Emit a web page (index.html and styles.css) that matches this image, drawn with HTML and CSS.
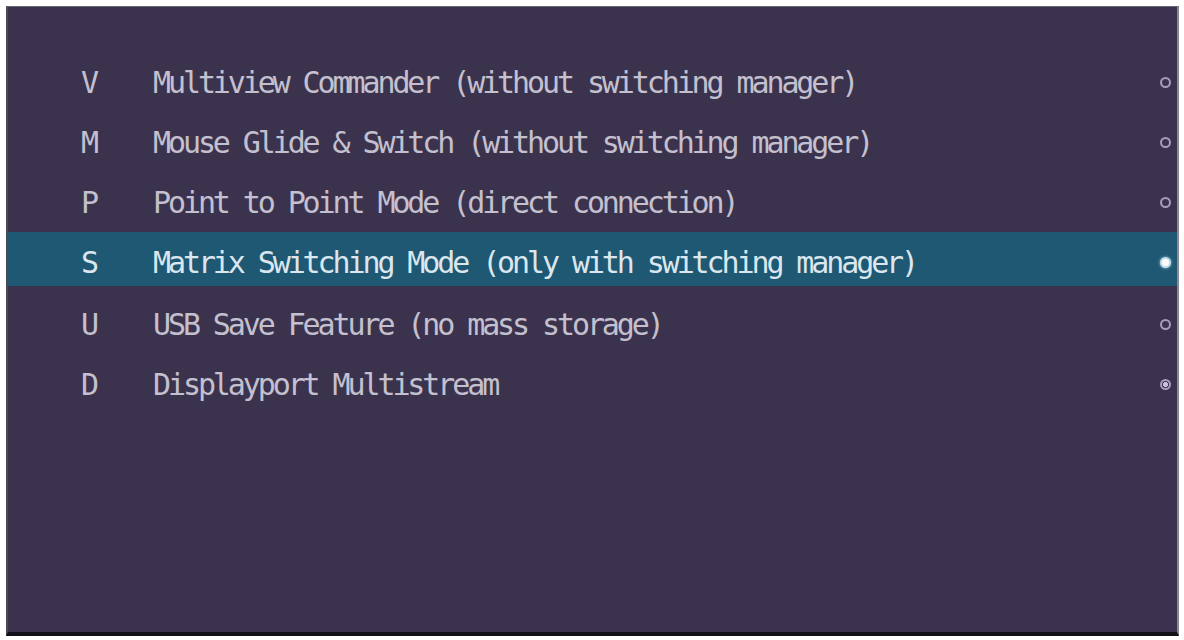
FILE: index.html
```html
<!DOCTYPE html>
<html>
<head>
<meta charset="utf-8">
<link rel="stylesheet" href="styles.css">
</head>
<body>
<div class="panel">
  <ul class="menu">
    <li class="row"><span class="key">V</span><span class="label">Multiview Commander (without switching manager)</span><span class="radio"></span></li>
    <li class="row"><span class="key">M</span><span class="label">Mouse Glide &amp; Switch (without switching manager)</span><span class="radio"></span></li>
    <li class="row"><span class="key">P</span><span class="label">Point to Point Mode (direct connection)</span><span class="radio"></span></li>
    <li class="row active"><span class="key">S</span><span class="label">Matrix Switching Mode (only with switching manager)</span><span class="radio on"></span></li>
    <li class="row"><span class="key">U</span><span class="label">USB Save Feature (no mass storage)</span><span class="radio"></span></li>
    <li class="row"><span class="key">D</span><span class="label">Displayport Multistream</span><span class="radio checked"></span></li>
  </ul>
</div>
</body>
</html>
```
FILE: styles.css
```css
html, body {
  margin: 0;
  padding: 0;
  background: #ffffff;
  width: 1184px;
  height: 640px;
  overflow: hidden;
}
.panel {
  margin: 6px 5px 0 6px;
  height: 630px;
  box-sizing: border-box;
  background: #3b334d;
  border-left: 2px solid #4a4a52;
  border-top: 1px solid #6a6676;
  border-right: 2px solid #8a8792;
  border-bottom: 4px solid #121018;
  padding-top: 45px;
}
.menu {
  list-style: none;
  margin: 0;
  padding: 0;
}
.row {
  display: flex;
  align-items: center;
  height: 60px;
  box-sizing: border-box;
  font-family: "DejaVu Sans Mono", "Liberation Mono", monospace;
  font-size: 30px;
  color: #c4c0cf;
}
.row.active {
  background: #1e5872;
  color: #dbe6ef;
  height: 54px;
  padding-top: 6px;
  margin: 0 0 8px;
}
.key {
  width: 145px;
  padding-left: 73px;
  box-sizing: border-box;
  display: inline-block;
  letter-spacing: -3px;
}
.label {
  flex: 1;
  display: inline-block;
  letter-spacing: -3.1px;
  white-space: nowrap;
}
.radio {
  width: 7px;
  height: 7px;
  border: 2px solid #a69ebb;
  border-radius: 50%;
  margin-right: 6px;
  box-sizing: content-box;
}
.radio.on {
  border-color: #c6dcea;
  background: #ffffff;
  box-shadow: 0 0 3px #9fd0ea;
}
.radio.checked {
  background: radial-gradient(circle, #c8c0d8 0 45%, #3b334d 55%);
}
```
